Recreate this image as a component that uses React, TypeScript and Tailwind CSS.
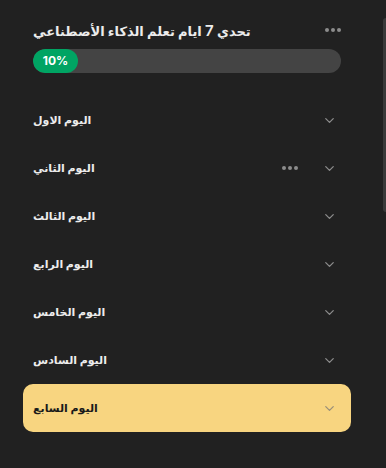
import { ChevronDown } from "lucide-react";

const days = [
  "اليوم الاول",
  "اليوم الثاني",
  "اليوم الثالث",
  "اليوم الرابع",
  "اليوم الخامس",
  "اليوم السادس",
  "اليوم السابع",
];

function Dots() {
  return (
    <div className="flex items-center gap-[2px]">
      <span className="w-[4px] h-[4px] rounded-full bg-[#8c8c8c]" />
      <span className="w-[4px] h-[4px] rounded-full bg-[#8c8c8c]" />
      <span className="w-[4px] h-[4px] rounded-full bg-[#8c8c8c]" />
    </div>
  );
}

export default function App() {
  return (
    <div
      className="relative w-[386px] h-[468px] bg-[#212121] overflow-hidden"
      style={{ fontFamily: "Inter, 'DejaVu Sans', sans-serif" }}
    >
      {/* scrollbar thumb */}
      <div className="absolute right-0 top-[18px] w-[3px] h-[194px] rounded-l-full bg-[#3a3a3a]" />

      <div className="pt-[19px] pl-[33px] pr-[45px]">
        <div className="flex items-center justify-between h-[22px]">
          <h1 className="text-[13px] font-semibold text-[#ececec] leading-none">
            تحدي <span className="text-[15px]">7</span> ايام تعلم الذكاء الأصطناعي
          </h1>
          <Dots />
        </div>

        <div className="mt-[8px] h-[24px] rounded-full bg-[#444444] overflow-hidden">
          <div className="h-full w-[45px] rounded-full bg-[#00a463] flex items-center justify-center">
            <span className="text-[12px] font-bold text-white leading-none">10%</span>
          </div>
        </div>
      </div>

      <div className="mt-[23px] mx-[23px] w-[328px] flex flex-col">
        {days.map((d, i) => {
          const active = i === days.length - 1;
          return (
            <div
              key={d}
              className={
                active
                  ? "h-[48px] pl-[10px] pr-[14px] flex items-center justify-between rounded-[10px] bg-[#f8d580]"
                  : "h-[48px] pl-[10px] pr-[14px] flex items-center justify-between"
              }
            >
              <span
                className={
                  active
                    ? "text-[11px] font-bold text-[#1a1a1a]"
                    : "text-[11px] font-bold text-[#ececec]"
                }
              >
                {d}
              </span>
              <div className="flex items-center gap-[24px]">
                {i === 1 && <Dots />}
                <ChevronDown
                  size={15}
                  strokeWidth={2}
                  className={active ? "text-[#9a8f78]" : "text-[#8c8c8c]"}
                />
              </div>
            </div>
          );
        })}
      </div>
    </div>
  );
}
